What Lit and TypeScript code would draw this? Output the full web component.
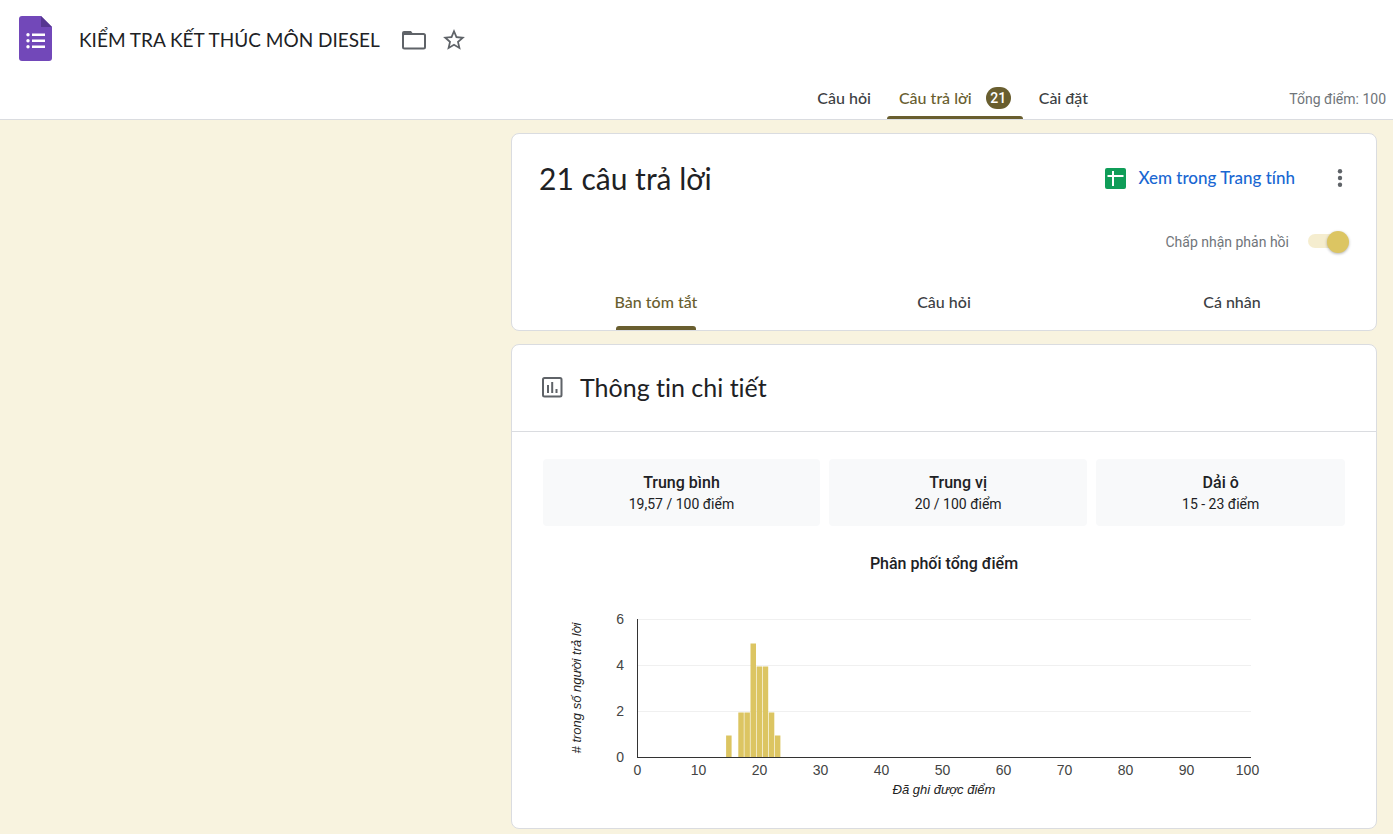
import { LitElement, html, svg, css } from "lit";
import { customElement, property, state } from "lit/decorators.js";

interface Stat {
  label: string;
  value: string;
}

const STATS: Stat[] = [
  { label: "Trung bình", value: "19,57 / 100 điểm" },
  { label: "Trung vị", value: "20 / 100 điểm" },
  { label: "Dải ô", value: "15 - 23 điểm" },
];

const SCORES: [number, number][] = [
  [15, 1],
  [17, 2],
  [18, 2],
  [19, 5],
  [20, 4],
  [21, 4],
  [22, 2],
  [23, 1],
];

@customElement("score-chart")
class ScoreChart extends LitElement {
  @property({ attribute: false }) scores: [number, number][] = [];

  static styles = css`
    :host {
      display: block;
    }
    .plot {
      display: block;
      width: 100%;
      height: auto;
      font-family: "Liberation Sans", Arial, sans-serif;
      font-size: 14px;
    }
    .grid {
      stroke: #f0f0f0;
    }
    .axis {
      stroke: #333;
    }
    .bar {
      fill: #dcc562;
    }
    .tick {
      fill: #444;
    }
    .middle {
      text-anchor: middle;
    }
    .end {
      text-anchor: end;
    }
    .title {
      fill: #222;
      font-size: 13px;
      font-style: italic;
      text-anchor: middle;
    }
  `;

  render() {
    const left = 94.5;
    const base = 177.5;
    const x = (v: number) => left + v * 6.1;
    const y = (v: number) => base - v * 23;
    const xs = [0, 10, 20, 30, 40, 50, 60, 70, 80, 90, 100];
    return html`
      <svg class="plot" viewBox="0 0 802 220" role="img" aria-label="Phân phối tổng điểm">
        ${[2, 4, 6].map(
          (v) => svg`<line class="grid" x1=${left} x2="708" y1=${y(v)} y2=${y(v)}></line>`
        )}
        ${this.scores.map(
          ([score, n]) =>
            svg`<rect class="bar" x=${x(score) - 2.9} y=${y(n) + 1} width="5.5" height=${n * 23 - 1}></rect>`
        )}
        <line class="axis" x1=${left} x2=${left} y1="39" y2="178"></line>
        <line class="axis" x1="94" x2="708" y1=${base} y2=${base}></line>
        ${[0, 2, 4, 6].map(
          (v) => svg`<text class="tick end" x="81" y=${y(v) + 4}>${v}</text>`
        )}
        ${xs.map((v) => svg`<text class="tick middle" x=${x(v)} y="195">${v}</text>`)}
        <text class="title" x="401" y="214">Đã ghi được điểm</text>
        <text class="title" transform="translate(38 108) rotate(-90)"># trong số người trả lời</text>
      </svg>
    `;
  }
}

@customElement("app-root")
class AppRoot extends LitElement {
  @state() private accepting = true;

  static styles = css`
    :host {
      display: block;
      min-height: 100vh;
      background: #f8f3df;
      color: #202124;
      font-family: Roboto, sans-serif;
      font-size: 14px;
      line-height: 20px;
      font-variant-ligatures: none;
    }
    * {
      box-sizing: border-box;
    }
    h1,
    h2,
    h3,
    p,
    dl,
    dd {
      margin: 0;
      font-weight: 400;
    }
    button {
      margin: 0;
      padding: 0;
      border: 0;
      background: none;
      color: inherit;
      font: inherit;
      font-variant-ligatures: none;
      cursor: pointer;
    }
    svg {
      display: block;
    }
    .header {
      background: #fff;
      border-bottom: 1px solid #dadce0;
    }
    .bar {
      display: flex;
      align-items: center;
      height: 80px;
      padding-left: 19px;
    }
    .logo {
      margin-bottom: 3px;
    }
    .name {
      margin: 0 22px 0 27px;
      font-family: Lato, Roboto, sans-serif;
      font-size: 19px;
      line-height: 28px;
    }
    .icon {
      color: #5f6368;
    }
    .star {
      margin-left: 16px;
    }
    .nav {
      display: flex;
      justify-content: flex-end;
      align-items: stretch;
      height: 39px;
      padding-right: 7px;
      font-family: Lato, Roboto, sans-serif;
      font-size: 16px;
      font-weight: 500;
    }
    .tabs {
      display: flex;
    }
    .tab {
      display: flex;
      align-items: center;
      gap: 14px;
      padding: 0 16px 3px;
      color: #3c4043;
    }
    .tab.on {
      padding: 0 12px 3px;
      color: #695e2f;
      position: relative;
    }
    .tab.on::after {
      content: "";
      position: absolute;
      inset: auto 0 0;
      height: 3px;
      border-radius: 3px 3px 0 0;
      background: #695e2f;
    }
    .count {
      min-width: 25px;
      border-radius: 11px;
      background: #695e2f;
      color: #fff;
      font-family: Roboto, sans-serif;
      font-size: 14px;
      line-height: 22px;
      text-align: center;
    }
    .total {
      display: flex;
      align-items: center;
      justify-content: flex-end;
      width: 282px;
      padding-bottom: 2px;
      color: #70757a;
      font-family: Roboto, sans-serif;
      font-size: 14px;
      font-weight: 400;
    }
    .main {
      display: grid;
      gap: 13px;
      max-width: 898px;
      margin-left: auto;
      padding: 13px 16px 5px;
    }
    .card {
      border: 1px solid #dadce0;
      border-radius: 8px;
      background: #fff;
    }
    .summary-head {
      display: flex;
      align-items: center;
      height: 88px;
      padding: 0 24px 0 27px;
    }
    .responses {
      flex: 1;
      font-family: Lato, Roboto, sans-serif;
      font-size: 30px;
      line-height: 40px;
    }
    .sheet {
      display: flex;
      align-items: center;
      gap: 12px;
      color: #1967d2;
      font-family: Lato, Roboto, sans-serif;
      font-size: 17px;
      font-weight: 500;
      text-decoration: none;
    }
    .more {
      margin-left: 33px;
    }
    .accept {
      display: flex;
      align-items: center;
      justify-content: flex-end;
      gap: 19px;
      height: 40px;
      padding-right: 27px;
      color: #70757a;
    }
    .switch {
      appearance: none;
      position: relative;
      width: 41px;
      height: 14px;
      margin: 0 0 2px;
      border-radius: 7px;
      background: linear-gradient(90deg, #f5edcf 37px, transparent 37px);
      cursor: pointer;
    }
    .switch::after {
      content: "";
      position: absolute;
      top: -3px;
      left: 0;
      width: 22px;
      height: 22px;
      border-radius: 50%;
      background: #bdbdbd;
      box-shadow: 0 1px 3px rgba(0, 0, 0, 0.3);
    }
    .switch:checked::after {
      left: 19px;
      background: #dcc562;
    }
    .views {
      display: grid;
      grid-template-columns: repeat(3, 1fr);
      height: 53px;
      margin-top: 15px;
      font-family: Lato, Roboto, sans-serif;
      font-size: 16px;
      font-weight: 500;
    }
    .view {
      justify-self: center;
      padding-bottom: 4px;
      color: #3c4043;
    }
    .view.on {
      position: relative;
      color: #695e2f;
    }
    .view.on::after {
      content: "";
      position: absolute;
      inset: auto 1px 0;
      height: 4px;
      border-radius: 3px 3px 0 0;
      background: #695e2f;
    }
    .insight-head {
      display: flex;
      align-items: center;
      gap: 16px;
      height: 87px;
      padding: 0 28px 2px;
      border-bottom: 1px solid #dadce0;
    }
    .insight-title {
      font-family: Lato, Roboto, sans-serif;
      font-size: 25px;
      line-height: 32px;
    }
    .insight-body {
      padding: 27px 31px 28px;
    }
    .stats {
      display: flex;
      gap: 9px;
    }
    .stat {
      flex: 1 1 auto;
      padding: 12px 16px;
      border-radius: 4px;
      background: #f8f9fa;
      text-align: center;
    }
    .stat-label {
      font-size: 16px;
      font-weight: 500;
      line-height: 23px;
    }
    .chart-title {
      margin: 26px 0 4px;
      font-size: 16px;
      font-weight: 500;
      line-height: 24px;
      text-align: center;
    }
  `;

  render() {
    return html`
      <header class="header">
        <div class="bar">
          <svg class="logo" width="33" height="45" viewBox="0 0 33 45" aria-hidden="true">
            <path fill="#7248b9" d="M3 0h19l11 11v31a3 3 0 0 1-3 3H3a3 3 0 0 1-3-3V3a3 3 0 0 1 3-3z" />
            <path fill="#563691" d="M22 0l11 11H22z" />
            <path fill="#fff" d="M13 17.500h13v2.400H13zM13 23.500h13v2.400H13zM13 29.500h13v2.400H13z" />
            <circle cx="9" cy="18.700" r="1.700" fill="#fff" />
            <circle cx="9" cy="24.700" r="1.700" fill="#fff" />
            <circle cx="9" cy="30.700" r="1.700" fill="#fff" />
          </svg>
          <h1 class="name">KIỂM TRA KẾT THÚC MÔN DIESEL</h1>
          <button class="icon" aria-label="Di chuyển">
            <svg width="24" height="20" viewBox="0 0 24 20">
              <path fill="none" stroke="currentColor" stroke-width="2" d="M1 4.500v12.500A1.500 1.500 0 0 0 2.500 18.500h19a1.500 1.500 0 0 0 1.500-1.500V5.500A1.500 1.500 0 0 0 21.500 4H2z" />
              <path fill="currentColor" d="M2 1h7l2.500 3.500H0V3a2 2 0 0 1 2-2z" />
            </svg>
          </button>
          <button class="icon star" aria-label="Gắn dấu sao">
            <svg width="24" height="24" viewBox="1 1 22 22">
              <path fill="currentColor" d="M22 9.240l-7.190-.62L12 2 9.190 8.630 2 9.240l5.460 4.730L5.820 21 12 17.270 18.180 21l-1.630-7.030L22 9.240zM12 15.400l-3.760 2.270 1-4.280-3.320-2.880 4.380-.38L12 6.100l1.710 4.040 4.380.38-3.320 2.880 1 4.280L12 15.400z" />
            </svg>
          </button>
        </div>
        <nav class="nav">
          <div class="tabs">
            <button class="tab">Câu hỏi</button>
            <button class="tab on">Câu trả lời<span class="count">21</span></button>
            <button class="tab">Cài đặt</button>
          </div>
          <span class="total">Tổng điểm: 100</span>
        </nav>
      </header>
      <main class="main">
        <section class="card">
          <div class="summary-head">
            <h2 class="responses">21 câu trả lời</h2>
            <a class="sheet" href="#">
              <svg width="21" height="21" viewBox="0 0 21 21" aria-hidden="true">
                <rect width="21" height="21" rx="2" fill="#0f9d58" />
                <path fill="#fff" d="M7 3h2v4h9.500v2H9v9H7V9H2.500V7H7z" />
              </svg>
              Xem trong Trang tính
            </a>
            <button class="icon more" aria-label="Tùy chọn khác">
              <svg width="24" height="24" viewBox="0 0 24 24" fill="currentColor">
                <circle cx="12" cy="5.300" r="2.200" />
                <circle cx="12" cy="12" r="2.200" />
                <circle cx="12" cy="18.700" r="2.200" />
              </svg>
            </button>
          </div>
          <div class="accept">
            <label for="accept">Chấp nhận phản hồi</label>
            <input
              class="switch"
              id="accept"
              type="checkbox"
              role="switch"
              .checked=${this.accepting}
              @change=${(e: Event) => (this.accepting = (e.target as HTMLInputElement).checked)}
            />
          </div>
          <div class="views">
            <button class="view on">Bản tóm tắt</button>
            <button class="view">Câu hỏi</button>
            <button class="view">Cá nhân</button>
          </div>
        </section>
        <section class="card">
          <div class="insight-head">
            <svg class="icon" width="24" height="24" viewBox="0 0 24 24" aria-hidden="true">
              <rect x="3" y="3" width="18.500" height="18.500" rx="1.500" fill="none" stroke="currentColor" stroke-width="2" />
              <path fill="currentColor" d="M7 10h2v8H7zM11.200 7h2v11h-2zM15.500 14h2v4h-2z" />
            </svg>
            <h2 class="insight-title">Thông tin chi tiết</h2>
          </div>
          <div class="insight-body">
            <dl class="stats">
              ${STATS.map(
                (s) => html`<div class="stat">
                  <dt class="stat-label">${s.label}</dt>
                  <dd>${s.value}</dd>
                </div>`
              )}
            </dl>
            <h3 class="chart-title">Phân phối tổng điểm</h3>
            <score-chart .scores=${SCORES}></score-chart>
          </div>
        </section>
      </main>
    `;
  }
}
